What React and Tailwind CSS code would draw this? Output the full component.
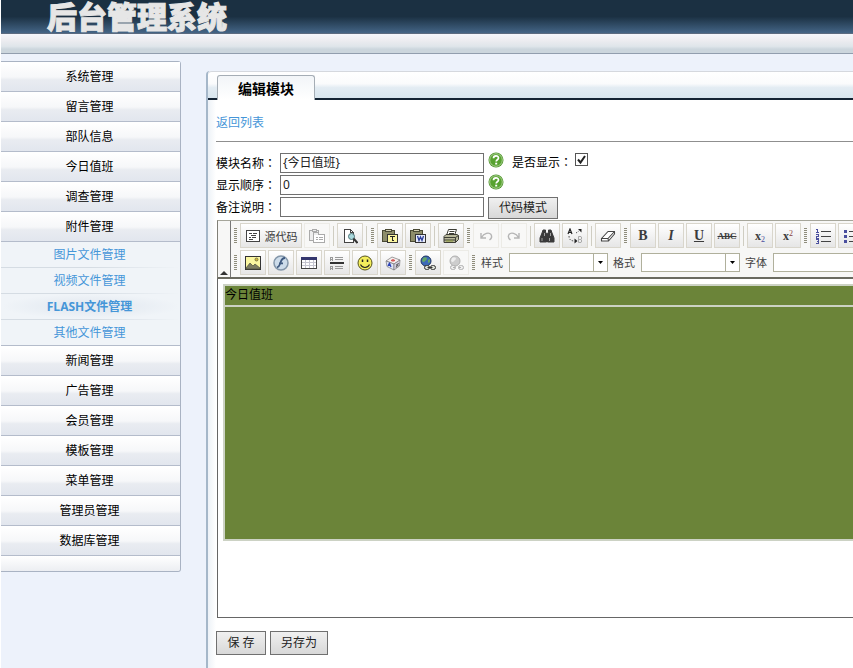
import React, { useState } from "react";
import clsx from "clsx";

const MENU = [
  { title: "系统管理" },
  { title: "留言管理" },
  { title: "部队信息" },
  { title: "今日值班" },
  { title: "调查管理" },
  {
    title: "附件管理",
    children: ["图片文件管理", "视频文件管理", "FLASH文件管理", "其他文件管理"],
  },
  { title: "新闻管理" },
  { title: "广告管理" },
  { title: "会员管理" },
  { title: "模板管理" },
  { title: "菜单管理" },
  { title: "管理员管理" },
  { title: "数据库管理" },
];

const ACTIVE_ITEM = "FLASH文件管理";

// 工具栏图标，统一 16x16
const ICONS = {
  source: (
    <g fill="none" stroke="#444" shapeRendering="crispEdges">
      <path d="M1.5 2.5h13v11h-13z" fill="#fff" />
      <path d="M4 5.5h3M8 5.5h4M6 7.5h5M4 9.5h2M7 9.5h4M4 11.5h4" />
    </g>
  ),
  template: (
    <g fill="#eee" stroke="#aaa" shapeRendering="crispEdges">
      <path d="M.5 2.5h9v10h-9z" />
      <path d="M3 1.5h4v2h-4z" />
      <path d="M4.5 6.5h11v8h-11z" fill="#fff" />
      <path d="M4.5 6.5v-2h5v2M7 9.5h2M10 9.5h4M7 11.5h2M10 11.5h4" />
    </g>
  ),
  preview: (
    <g fill="none" stroke="#444">
      <path d="M2.5 1.5h6l3 3v10h-9z" fill="#fff" shapeRendering="crispEdges" />
      <path d="M8.5 1.5v3h3" shapeRendering="crispEdges" />
      <circle cx="9.5" cy="8.5" r="3" fill="#a9d8dc" stroke="#4b7377" />
      <path d="M11.5 10.5l4 4.5" strokeWidth="2" stroke="#333" />
    </g>
  ),
  pasteText: (
    <g shapeRendering="crispEdges">
      <path d="M.5 2.5h12v11h-12z" fill="#8d8d6a" stroke="#4a4a35" />
      <path d="M3.5 3.5v-2h6v2z" fill="#d2cfb4" stroke="#4a4a35" />
      <path d="M5.5 6.5h10v8h-10z" fill="#fbf6a0" stroke="#333" />
      <path d="M8 8.5h5M10.5 8v5M9.5 12.5h2" stroke="#222" />
    </g>
  ),
  pasteWord: (
    <g shapeRendering="crispEdges">
      <path d="M.5 2.5h12v11h-12z" fill="#8d8d6a" stroke="#4a4a35" />
      <path d="M3.5 3.5v-2h6v2z" fill="#d2cfb4" stroke="#4a4a35" />
      <path d="M5.5 6.5h10v8h-10z" fill="#e7ecfb" stroke="#333" />
      <path d="M7.5 8l1.5 4.5 1.5-3.5 1.5 3.5L13.5 8" fill="none" stroke="#2a3d9b" strokeWidth="1.3" shapeRendering="auto" />
    </g>
  ),
  print: (
    <g stroke="#3d3d35">
      <path d="M5.5 1.5h8l-2 6h-8z" fill="#fff" />
      <path d="M6.5 3.5h5M6 5.5h5" />
      <path d="M1 8.5l2-2h11l1.5 1v4l-3 3H1z" fill="#b9b99c" />
      <path d="M1 9.5h11.5l3-2M12.5 9.5v5M1 12h11" fill="none" />
      <path d="M3 13h7" stroke="#8b9a3a" />
    </g>
  ),
  undo: (
    <g fill="none" stroke="#b5b5b5" strokeWidth="1.4">
      <path d="M3 5v5h5M3.5 9.5C6 5 11 4 13 6.5c1.5 2.5 .5 4-1.5 5.5" />
    </g>
  ),
  redo: (
    <g fill="none" stroke="#b5b5b5" strokeWidth="1.4">
      <path d="M13 5v5H8M12.5 9.5C10 5 5 4 3 6.5c-1.5 2.5-.5 4 1.5 5.5" />
    </g>
  ),
  find: (
    <g fill="#3a3a3a" stroke="#3a3a3a">
      <path d="M4 2h2.5v2l1 2v8H1V10L3 5zM12 2H9.5v2l-1 2v8H15V10L13 5z" />
      <path d="M7 6h2v3H7z" />
      <path d="M3 10v3M10.5 10v3M5.5 5v3M11.5 5v3" stroke="#bbb" strokeWidth=".8" />
    </g>
  ),
  replace: (
    <g fill="none" stroke="#555">
      <path d="M1 6l2-5 2 5M2 4.5h2.5" stroke="#222" strokeWidth="1.2" />
      <path d="M11.5 8.5v6h2.5q1.5-1.5 0-3h-2.5M11.5 8.5H14q1.5 1.5 0 3" stroke="#aaa" />
      <path d="M2 8c0 4 2 5 6 5M9 5l3-2" strokeDasharray="1.5 1.5" />
      <path d="M7.5 10.5l3 2.5-3 2.5zM11 1h3.5v3.5z" fill="#222" stroke="none" />
    </g>
  ),
  eraser: (
    <g fill="#fff" stroke="#444" strokeWidth="1.1" strokeLinejoin="round">
      <path d="M1.5 10.5L8 3.5h6.5v2.5l-6 7h-7z" />
      <path d="M1.5 10.5h6.5l6.5-7M8 10.5l.5 2.5" fill="none" />
    </g>
  ),
  image: (
    <g>
      <path d="M.5 1.5h15v13H.5z" fill="#fbf7a0" stroke="#333" shapeRendering="crispEdges" />
      <path d="M1 13l4-5 3 3 2-2 5 4v1H1z" fill="#7d7d62" stroke="#4d4d3a" strokeWidth=".7" />
      <circle cx="11.5" cy="4.5" r="1.5" fill="#d7bb32" stroke="#554" strokeWidth=".7" />
    </g>
  ),
  flash: (
    <g>
      <circle cx="8" cy="8" r="7" fill="#cddcea" stroke="#8396a9" strokeWidth="1.5" />
      <path d="M12 3C8 3 8 7 7 9c-.7 2-1.5 3-3 3.5M6 8.3h4" fill="none" stroke="#3f5a80" strokeWidth="1.8" />
    </g>
  ),
  table: (
    <g shapeRendering="crispEdges">
      <path d="M.5 2.5h15v11H.5z" fill="#fff" stroke="#444" />
      <path d="M0 2h16v3H0z" fill="#34366e" />
      <path d="M4.5 5v8M8.5 5v8M12.5 5v8M1 7.5h14M1 10.5h14" stroke="#c5c5d0" />
    </g>
  ),
  hr: (
    <g stroke="#999" shapeRendering="crispEdges">
      <path d="M1 8h14" stroke="#333" strokeWidth="2" />
      <path d="M6 2.5h8M6 4.5h8M6 11.5h8M6 13.5h8" />
      <path d="M1.5 5.5v-3h2v3M1 4.5h2M1.5 14.5v-3h2v3M1 13.5h2" fill="none" />
    </g>
  ),
  smiley: (
    <g>
      <circle cx="8" cy="8" r="7" fill="#f4ee5c" stroke="#55531d" />
      <path d="M5.5 4.5v2.5M10.5 4.5v2.5" stroke="#222" strokeWidth="1.5" />
      <path d="M3.5 9.5c2 4 7 4 9 0" fill="none" stroke="#222" strokeWidth="1.1" />
    </g>
  ),
  specialChar: (
    <g stroke="#777" strokeWidth=".7" strokeLinejoin="round">
      <path d="M1 6l6-4 8 3-6 4z" fill="#f6efef" />
      <path d="M1 6l8 3v6l-7-3.5z" fill="#dfe3f6" />
      <path d="M9 9l6-4-.5 6L9 15z" fill="#dcd5e8" />
      <path d="M6 5.5q2-2 4 0-2 1.5-4 0z" fill="#d66" stroke="#c44" />
      <path d="M3 11l1.5-3L6 12M3.5 10.5h2" fill="none" stroke="#2b42b5" strokeWidth="1.2" />
      <path d="M11 9.5l2.5 1.5M13.5 8L11 12.5" stroke="#666" strokeWidth="1.2" />
    </g>
  ),
  link: (
    <g>
      <circle cx="6" cy="6" r="5" fill="#3d6ab8" stroke="#1f3563" />
      <path d="M3 3q2-1.5 4 0 0 2-2 3-1 2-3 0zM8 5l2-1v3L8 8z" fill="#65a867" />
      <g fill="#dfe3da" stroke="#333">
        <rect x="4.5" y="10.5" width="5" height="4" rx="2" />
        <rect x="10.5" y="10.5" width="5" height="4" rx="2" />
        <path d="M7.5 12.5h5" />
      </g>
    </g>
  ),
  unlink: (
    <g stroke="#b0b0b0">
      <circle cx="7" cy="6" r="5" fill="#cdcdcd" />
      <path d="M4 3q2-1.5 4 0 0 2-2 3-1 2-3 0z" fill="#eee" stroke="none" />
      <rect x="2.5" y="10.5" width="5" height="4" rx="2" fill="#eee" />
      <rect x="10.5" y="10.5" width="5" height="4" rx="2" fill="#eee" />
      <path d="M5 12.5h2M11 12.5h2" />
    </g>
  ),
  ol: (
    <g shapeRendering="crispEdges">
      <path d="M6 3.5h10M6 8.5h10M6 13.5h10" stroke="#444" />
      <path d="M1 1.5h1.5v3M1 4.5h3M1 6.5h2.5v2H1.5v1.5h2.5M1 11.5h2.5v3.5H1M1.5 13.5h2" fill="none" stroke="#4a4f9e" />
    </g>
  ),
  ul: (
    <g shapeRendering="crispEdges">
      <path d="M6 3.5h10M6 8.5h10M6 13.5h10" stroke="#444" />
      <path d="M1 2h3v3H1zM1 7h3v3H1zM1 12h3v3H1z" fill="#4a4f9e" />
    </g>
  ),
};

const ROW_ONE = [
  { type: "handle" },
  { icon: "source", label: "源代码", text: "源代码" },
  { icon: "template", label: "模板", disabled: true },
  { type: "sep" },
  { icon: "preview", label: "预览" },
  { type: "sep" },
  { type: "handle" },
  { icon: "pasteText", label: "粘贴为无格式文本" },
  { icon: "pasteWord", label: "从 MS Word 粘贴" },
  { type: "sep" },
  { icon: "print", label: "打印" },
  { type: "handle" },
  { icon: "undo", label: "撤消", disabled: true },
  { icon: "redo", label: "重做", disabled: true },
  { type: "sep" },
  { icon: "find", label: "查找" },
  { icon: "replace", label: "替换" },
  { type: "sep" },
  { icon: "eraser", label: "清除格式" },
  { type: "handle" },
  { label: "加粗", glyph: <b>B</b> },
  { label: "倾斜", glyph: <b className="italic">I</b> },
  { label: "下划线", glyph: <b className="underline">U</b> },
  { label: "删除线", glyph: <s className="text-[9px] font-bold">ABC</s> },
  { type: "sep" },
  {
    label: "下标",
    glyph: (
      <span className="text-[12px] font-bold">
        x<sub className="text-[8px] font-normal text-[#4a4f9e]">2</sub>
      </span>
    ),
  },
  {
    label: "上标",
    glyph: (
      <span className="text-[12px] font-bold">
        x<sup className="text-[8px] font-normal text-[#8a4040]">2</sup>
      </span>
    ),
  },
  { type: "handle" },
  { icon: "ol", label: "编号列表" },
  { icon: "ul", label: "项目列表" },
];

const ROW_TWO = [
  { type: "handle" },
  { icon: "image", label: "图象" },
  { icon: "flash", label: "Flash" },
  { icon: "table", label: "表格" },
  { icon: "hr", label: "水平线" },
  { icon: "smiley", label: "表情" },
  { icon: "specialChar", label: "特殊符号" },
  { type: "handle" },
  { icon: "link", label: "超链接" },
  { icon: "unlink", label: "取消超链接", disabled: true },
  { type: "handle" },
  { type: "select", id: "style", text: "样式" },
  { type: "select", id: "format", text: "格式" },
  { type: "select", id: "font", text: "字体" },
];

function ToolItem({ item }) {
  if (item.type === "sep") {
    return <span className="mx-px h-5 w-px shrink-0 bg-[#cfcdc2]" />;
  }
  if (item.type === "handle") {
    return (
      <span className="mx-px h-4 w-[3px] shrink-0 bg-[repeating-linear-gradient(to_bottom,#8f8d7c_0px,#8f8d7c_1px,transparent_1px,transparent_2px)]" />
    );
  }
  if (item.type === "select") {
    return (
      <span className="flex shrink-0 items-center pl-[3px]">
        <label htmlFor={item.id} className="w-7 text-[11px] text-[#444]">
          {item.text}
        </label>
        <span className="relative flex">
          <select
            id={item.id}
            className="h-[19px] w-[99px] appearance-none border border-[#b0b09c] bg-white"
          />
          <span className="pointer-events-none absolute inset-y-px right-px flex w-[14px] items-center justify-center border-l border-[#b0b09c]">
            <svg width="5" height="3" viewBox="0 0 5 3">
              <path d="M0 0h5L2.5 3z" />
            </svg>
          </span>
        </span>
      </span>
    );
  }
  return (
    <button
      type="button"
      aria-label={item.label}
      disabled={item.disabled}
      className={clsx(
        "flex h-[25px] shrink-0 items-center justify-center gap-1 border font-['Liberation_Serif',serif] text-[14px] text-[#3c3c3c]",
        item.text ? "w-[62px]" : "w-[26px]",
        item.disabled
          ? "border-[#ecebe6] bg-[#f8f8f7]"
          : "border-[#d9d6cc] bg-linear-to-b from-white to-[#e6e6e6]"
      )}
    >
      {item.icon && (
        <svg width="16" height="16" viewBox="0 0 16 16" className="shrink-0">
          {ICONS[item.icon]}
        </svg>
      )}
      {item.glyph}
      {item.text && (
        <span className="font-['Noto_Sans_CJK_SC',sans-serif] text-[11px]">{item.text}</span>
      )}
    </button>
  );
}

function Colon() {
  return <span className="font-['Noto_Sans_CJK_TC',sans-serif]">：</span>;
}

function HelpIcon() {
  return (
    <svg width="16" height="16" viewBox="0 0 16 16" className="-mt-px shrink-0">
      <circle cx="8" cy="8" r="7.5" fill="#4c9429" />
      <circle cx="8" cy="8" r="6.3" fill="#57a22f" stroke="#c5e0b0" strokeWidth=".8" />
      <path
        d="M5.5 6.3C5.5 3.2 10.5 3.2 10.5 6c0 1.7-2.3 1.8-2.3 3.5"
        fill="none"
        stroke="#fff"
        strokeWidth="1.7"
      />
      <path d="M7.2 10.7h2v1.8h-2z" fill="#fff" />
    </svg>
  );
}

function FormButton({ children, className }) {
  return (
    <button
      type="button"
      className={clsx(
        "shrink-0 border border-[#707070] bg-linear-to-b from-[#f0f0f0] to-[#d8d8d8] text-center text-[#222]",
        className
      )}
    >
      {children}
    </button>
  );
}

function Field({ id, label, value, onChange, children }) {
  return (
    <div className="flex h-5 items-start">
      <label htmlFor={id} className="w-16 shrink-0">
        {label}
        <Colon />
      </label>
      <input
        id={id}
        type="text"
        value={value}
        onChange={(e) => onChange(e.target.value)}
        className="mr-1 h-5 w-[204px] shrink-0 border border-[#707070] bg-white px-[2px] font-['Noto_Sans','Noto_Sans_CJK_SC',sans-serif] text-[#222]"
      />
      {children}
    </div>
  );
}

function Sidebar() {
  return (
    <nav className="mt-[7px] w-[180px] shrink-0 self-start rounded-r-[3px] border-t border-r border-b border-[#a9b3c3] bg-[#f0f4f8] text-center">
      {MENU.map((group) => (
        <div key={group.title}>
          <a
            href="#"
            className="block h-[30px] border-t border-b border-t-white border-b-[#b4bccb] bg-[linear-gradient(to_bottom,#ffffff_0%,#f6f7f9_50%,#e9ecf1_60%,#e2e6ee_100%)] pr-[2px] leading-7 text-black"
          >
            {group.title}
          </a>
          {group.children && (
            <ul className="border-b border-[#b4bccb]">
              {group.children.map((name, i) => (
                <li key={name}>
                  {i > 0 && (
                    <div className="h-px bg-linear-to-r from-[#d5dce3] via-[#d5dce3] to-transparent" />
                  )}
                  <a
                    href="#"
                    className={clsx(
                      "block h-[25px] pr-[2px] leading-[25px] text-[#4596d8]",
                      name === ACTIVE_ITEM &&
                        "bg-[radial-gradient(ellipse_at_center,#e4eaf1_20%,#f0f4f8_70%)] font-bold"
                    )}
                  >
                    {name}
                  </a>
                </li>
              ))}
            </ul>
          )}
        </div>
      ))}
      <div className="h-[15px] rounded-br-[3px] bg-linear-to-b from-white to-[#eceef2]" />
    </nav>
  );
}

function Editor() {
  return (
    <div className="ml-px overflow-hidden">
      <div className="flex border-t border-b-2 border-l border-t-[#a5a59a] border-b-[#6a6a60] border-l-[#808078] bg-[#f7f7f6]">
        <button
          type="button"
          aria-label="折叠工具栏"
          className="flex w-[13px] shrink-0 items-end justify-center border-r border-[#777] bg-[#f7f7f6] pb-[2px]"
        >
          <svg width="8" height="4" viewBox="0 0 8 4">
            <path d="M0 4h8L4 0z" fill="#333" />
          </svg>
        </button>
        <div className="flex flex-col gap-[2px] overflow-hidden py-[2px] pl-[2px]">
          <div className="flex items-center gap-[2px]">
            {ROW_ONE.map((item, i) => (
              <ToolItem key={i} item={item} />
            ))}
          </div>
          <div className="flex items-center gap-[2px]">
            {ROW_TWO.map((item, i) => (
              <ToolItem key={i} item={item} />
            ))}
          </div>
        </div>
      </div>
      <div className="h-[339px] border-b border-l border-[#666] bg-white pt-[5px] pl-[5px]">
        <div className="border-y-2 border-l-2 border-[#ccd2c4] bg-[#6b8439] text-black">
          <div className="h-[21px] border-b-2 border-[#ccd2c4] leading-[18px]">今日值班</div>
          <div className="h-[232px]" />
        </div>
      </div>
    </div>
  );
}

export default function App() {
  const [name, setName] = useState("{今日值班}");
  const [order, setOrder] = useState("0");
  const [remark, setRemark] = useState("");
  const [visible, setVisible] = useState(true);

  return (
    <div className="flex min-h-screen flex-col overflow-hidden border-l border-white bg-[#edf2fb] font-['Open_Sans','Noto_Sans_CJK_SC',sans-serif] text-[12px] leading-5 text-black">
      <header>
        <div className="h-[34px] border-b border-[#5b6b80] bg-[linear-gradient(to_bottom,#1b3042_0%,#1b3042_50%,#446586_100%)] pl-[46px]">
          <h1 className="font-['Noto_Sans_CJK_SC',sans-serif] text-[30px] leading-[30px] font-black text-[#e6e6e6] [-webkit-text-stroke:1px_#e6e6e6]">
            后台管理系统
          </h1>
        </div>
        <div className="h-5 border-b border-[#929eae] bg-[linear-gradient(to_bottom,#f4f6fc_0%,#ececf0_35%,#dfe5ea_65%,#ccd6dd_80%,#ccd6dd_100%)]" />
      </header>

      <div className="flex flex-1">
        <Sidebar />

        <main className="mt-[17px] ml-[25px] min-w-0 flex-1 rounded-tl-[4px] border-l-2 border-[#a5b7c9] bg-[linear-gradient(to_right,#edf2f7_0px,#ffffff_8px)]">
          <div className="flex h-[29px] items-end rounded-tl-[4px] border-t border-b-2 border-t-[#d5d8de] border-b-[#142333] bg-[linear-gradient(to_bottom,#ffffff_0%,#fafbfc_45%,#e3ecf3_60%,#d8e5ee_100%)] pl-[9px]">
            <h2 className="-mb-[2px] h-[25px] w-[98px] rounded-t-[3px] border-x border-t border-[#a5adb5] bg-linear-to-b from-[#f2f5f8] to-white text-center text-[14px] leading-[26px] font-bold">
              编辑模块
            </h2>
          </div>

          <div className="pl-2">
            <div className="h-[42px] border-b border-[#8f8f8f] pt-[13px]">
              <a href="#" className="text-[#4596d8]">
                返回列表
              </a>
            </div>

            <form className="pt-[11px]" onSubmit={(e) => e.preventDefault()}>
              <div className="flex flex-col gap-[2px]">
                <Field id="name" label="模块名称" value={name} onChange={setName}>
                  <HelpIcon />
                  <label htmlFor="visible" className="ml-2 shrink-0 leading-[18px]">
                    是否显示
                    <Colon />
                  </label>
                  <input
                    id="visible"
                    type="checkbox"
                    checked={visible}
                    onChange={(e) => setVisible(e.target.checked)}
                    className="peer ml-[3px] size-[13px] shrink-0 appearance-none border border-[#555] bg-white"
                  />
                  <svg
                    width="13"
                    height="13"
                    viewBox="0 0 13 13"
                    className="pointer-events-none invisible -ml-[13px] peer-checked:visible"
                  >
                    <path d="M3 6.5l2.5 3L10 3" fill="none" stroke="#222" strokeWidth="2" />
                  </svg>
                </Field>
                <Field id="order" label="显示顺序" value={order} onChange={setOrder}>
                  <HelpIcon />
                </Field>
                <Field id="remark" label="备注说明" value={remark} onChange={setRemark}>
                  <FormButton className="h-[22px] w-[70px]">代码模式</FormButton>
                </Field>
              </div>

              <div className="pt-[3px]">
                <Editor />
              </div>

              <div className="flex gap-1 pt-[13px]">
                <FormButton className="h-6 w-[50px]">保 存</FormButton>
                <FormButton className="h-6 w-[58px]">另存为</FormButton>
              </div>
            </form>
          </div>
        </main>
      </div>
    </div>
  );
}
